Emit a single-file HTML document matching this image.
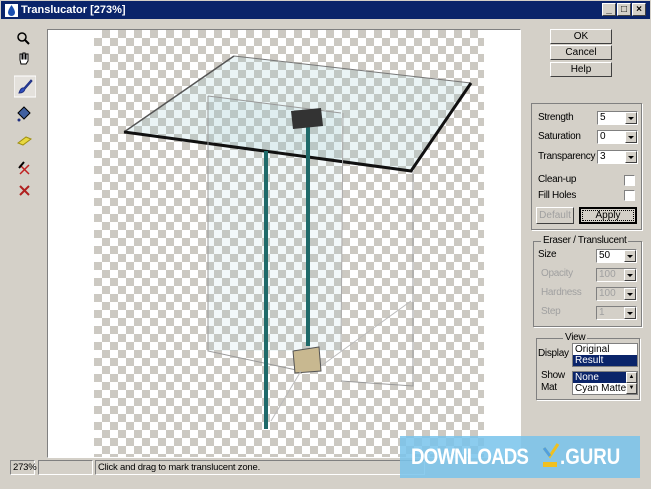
<!DOCTYPE html>
<html><head><meta charset="utf-8"><style>
*{margin:0;padding:0;box-sizing:border-box}
body{width:651px;height:489px;background:#d4d0c8;font-family:"Liberation Sans",sans-serif;font-size:10px;position:relative;overflow:hidden;color:#000}
.a{position:absolute}
.title{left:0;top:0;width:651px;height:20px;background:#0a246a;border:1px solid #d4d0c8}
.title span{position:absolute;left:20px;top:3px;color:#fff;font-weight:bold;font-size:11px}
.tb{top:3px;width:14px;height:13px;background:#d4d0c8;border:1px solid;border-color:#fff #404040 #404040 #fff;font-size:10px;line-height:11px;text-align:center;font-weight:bold}
.canvas{left:47px;top:29px;width:474px;height:429px;background:#fff;border:1px solid;border-color:#808080 #fff #fff #808080;overflow:hidden}
.chk{left:46px;top:0;width:390px;height:429px;background:repeating-conic-gradient(#ccc9c2 0 25%,#fff 0 50%) 0 0/16px 16px}
.btn{left:550px;width:62px;height:15px;border:1px solid;border-color:#fff #404040 #404040 #fff;text-align:center;line-height:13px}
.grp{border:1px solid #808080;box-shadow:1px 1px 0 #fff}
.lbl{font-size:10px;letter-spacing:-0.3px}
.sel{width:41px;height:14px;background:#fff;border:1px solid;border-color:#808080 #fff #fff #808080;font-size:10px;padding-left:2px;line-height:12px}
.sel i{position:absolute;right:0;top:0;width:12px;height:12px;background:#d4d0c8;border:1px solid;border-color:#fff #404040 #404040 #fff}
.sel i:after{content:"";position:absolute;left:2px;top:4px;border:3px solid transparent;border-top:3px solid #000}
.dis{color:#a0a0a0}
.dis.sel{background:#d4d0c8}
.cb{width:11px;height:11px;background:#fff;border:1px solid;border-color:#808080 #fff #fff #808080}
.st{top:460px;height:15px;border:1px solid;border-color:#808080 #fff #fff #808080;font-size:9.5px;line-height:13px;padding-left:2px;letter-spacing:-0.2px}
</style></head><body>
<div class="a title"><span>Translucator [273%]</span>
<svg class="a" style="left:4px;top:3px" width="13" height="13"><rect width="13" height="13" fill="#fff"/><path d="M6.5 1 Q10 6 10 8.5 A3.5 3.5 0 0 1 3 8.5 Q3 6 6.5 1Z" fill="#1a4fb0"/></svg></div>
<div class="a tb" style="left:602px">_</div><div class="a tb" style="left:617px">□</div><div class="a tb" style="left:632px">×</div>
<svg class="a" style="left:14px;top:30px" width="22" height="170">
<circle cx="8" cy="7" r="4" fill="none" stroke="#000" stroke-width="1.5"/><line x1="11" y1="10" x2="15" y2="14" stroke="#000" stroke-width="2"/>
<path d="M6 30v-6h2v5h1v-6h2v6h1v-5h2v7l-2 3h-5z" fill="#fff" stroke="#000"/>
<rect x="0" y="46" width="22" height="21" fill="#e4e1dc" stroke="#fff"/><path d="M5 63 Q7 57 10 58 L17 50 L18 51 L11 59 Q10 63 5 63Z" fill="#3050c0" stroke="#203080"/>
<path d="M4 83 L10 77 L16 83 L10 89Z" fill="#4060a0" stroke="#000"/><circle cx="5" cy="90" r="1.5" fill="#203080"/>
<path d="M4 113 L12 107 L17 109 L9 115Z" fill="#e8d840" stroke="#a09010"/>
<path d="M6 135 L15 144 M15 135 L6 144" stroke="#c02020" stroke-width="1.5"/><path d="M5 138 L10 132" stroke="#000" stroke-width="2"/>
<path d="M6 156 L15 165 M15 156 L6 165" stroke="#b02020" stroke-width="2"/>
</svg>
<div class="a canvas"><div class="a chk"></div>
<svg class="a" style="left:-47px;top:-29px" width="521" height="460">
<path d="M123 131 L233 55 L470 82 L410 170Z" fill="rgba(150,200,205,0.2)"/>
<path d="M207 95 L340 112 L340 350 L207 350Z" fill="rgba(150,200,205,0.12)"/>
<path d="M233 55 L470 82" stroke="#777" stroke-width="1"/><path d="M233 55 L123 131" stroke="#555" stroke-width="1.5"/>
<path d="M123 131 L410 170 L470 82" stroke="#111" stroke-width="3" fill="none"/>
<path d="M207 95 L207 350 L300 370 M412 170 L412 385 L340 380 M207 95 L340 112" stroke="#999" fill="none"/>
<path d="M342 112 L340 350" stroke="#aaa" fill="none"/>
<path d="M265 150 L265 428" stroke="#1f6a6a" stroke-width="4"/>
<path d="M307 125 L307 345" stroke="#1f6a6a" stroke-width="4"/>
<path d="M290 110 L320 107 L322 125 L292 128Z" fill="#333"/>
<path d="M292 350 L318 346 L320 370 L294 372Z" fill="#c8b890" stroke="#555"/>
<path d="M270 420 L300 370 M320 365 L410 300" stroke="#bbb" fill="none"/>
</svg></div>
<div class="a btn" style="top:29px">OK</div>
<div class="a btn" style="top:45px">Cancel</div>
<div class="a btn" style="top:62px">Help</div>
<div class="a grp" style="left:531px;top:103px;width:111px;height:127px"></div>
<div class="a lbl" style="left:538px;top:112px">Strength</div><div class="a sel" style="left:597px;top:111px">5<i></i></div>
<div class="a lbl" style="left:538px;top:131px">Saturation</div><div class="a sel" style="left:597px;top:130px">0<i></i></div>
<div class="a lbl" style="left:538px;top:151px">Transparency</div><div class="a sel" style="left:597px;top:150px">3<i></i></div>
<div class="a lbl" style="left:538px;top:174px">Clean-up</div><div class="a cb" style="left:624px;top:175px"></div>
<div class="a lbl" style="left:538px;top:190px">Fill Holes</div><div class="a cb" style="left:624px;top:190px"></div>
<div class="a btn dis" style="left:536px;top:207px;width:38px;height:17px;line-height:15px">Default</div>
<div class="a btn" style="left:579px;top:207px;width:58px;height:17px;line-height:13px;border:2px solid #000"><div style="border:1px dotted #000;margin:1px;height:11px;line-height:10px">Apply</div></div>
<div class="a grp" style="left:533px;top:241px;width:109px;height:86px"></div>
<div class="a lbl" style="left:541px;top:235px;background:#d4d0c8;padding:0 2px">Eraser / Translucent</div>
<div class="a lbl" style="left:538px;top:249px">Size</div><div class="a sel" style="left:596px;top:249px">50<i></i></div>
<div class="a lbl dis" style="left:541px;top:268px">Opacity</div><div class="a sel dis" style="left:596px;top:268px">100<i></i></div>
<div class="a lbl dis" style="left:541px;top:287px">Hardness</div><div class="a sel dis" style="left:596px;top:287px">100<i></i></div>
<div class="a lbl dis" style="left:541px;top:306px">Step</div><div class="a sel dis" style="left:596px;top:306px">1<i></i></div>
<div class="a grp" style="left:536px;top:338px;width:104px;height:62px"></div>
<div class="a lbl" style="left:563px;top:332px;background:#d4d0c8;padding:0 2px">View</div>
<div class="a lbl" style="left:538px;top:348px">Display</div>
<div class="a" style="left:572px;top:343px;width:66px;height:24px;background:#fff;border:1px solid #808080;font-size:10px;line-height:11px"><div style="padding-left:2px">Original</div><div style="background:#0a246a;color:#fff;padding-left:2px">Result</div></div>
<div class="a lbl" style="left:541px;top:370px;line-height:12px">Show<br>Mat</div>
<div class="a" style="left:572px;top:371px;width:66px;height:24px;background:#fff;border:1px solid #808080;font-size:10px;line-height:11px;overflow:hidden;white-space:nowrap"><div style="background:#0a246a;color:#fff;padding-left:2px;width:53px">None</div><div style="padding-left:2px">Cyan Matte</div><div class="a" style="right:0;top:0;width:11px;height:22px;background:#d4d0c8"><div style="height:11px;border:1px solid;border-color:#fff #404040 #404040 #fff;font-size:6px;line-height:8px;text-align:center">▲</div><div style="height:11px;border:1px solid;border-color:#fff #404040 #404040 #fff;font-size:6px;line-height:8px;text-align:center">▼</div></div></div>
<div class="a st" style="left:10px;width:25px">273%</div>
<div class="a st" style="left:38px;width:55px"></div>
<div class="a st" style="left:95px;width:330px;padding-left:2px">Click and drag to mark translucent zone.</div>
<div class="a" style="left:400px;top:436px;width:240px;height:42px;background:rgba(120,195,235,0.85)"></div>
<div class="a" style="left:411px;top:444px;color:#fff;font-size:22px;font-weight:bold;letter-spacing:-1px;transform:scaleX(0.85);transform-origin:left">DOWNLOADS</div>
<svg class="a" style="left:541px;top:440px" width="20" height="32"><path d="M3 8 L9 16 L17 4" stroke="#f0c020" stroke-width="3" fill="none"/><path d="M9 16 L3 8" stroke="#50a0e0" stroke-width="3"/><rect x="2" y="22" width="14" height="5" fill="#f0c020"/></svg>
<div class="a" style="left:560px;top:444px;color:#fff;font-size:22px;font-weight:bold;transform:scaleX(0.85);transform-origin:left">.GURU</div>
</body></html>
